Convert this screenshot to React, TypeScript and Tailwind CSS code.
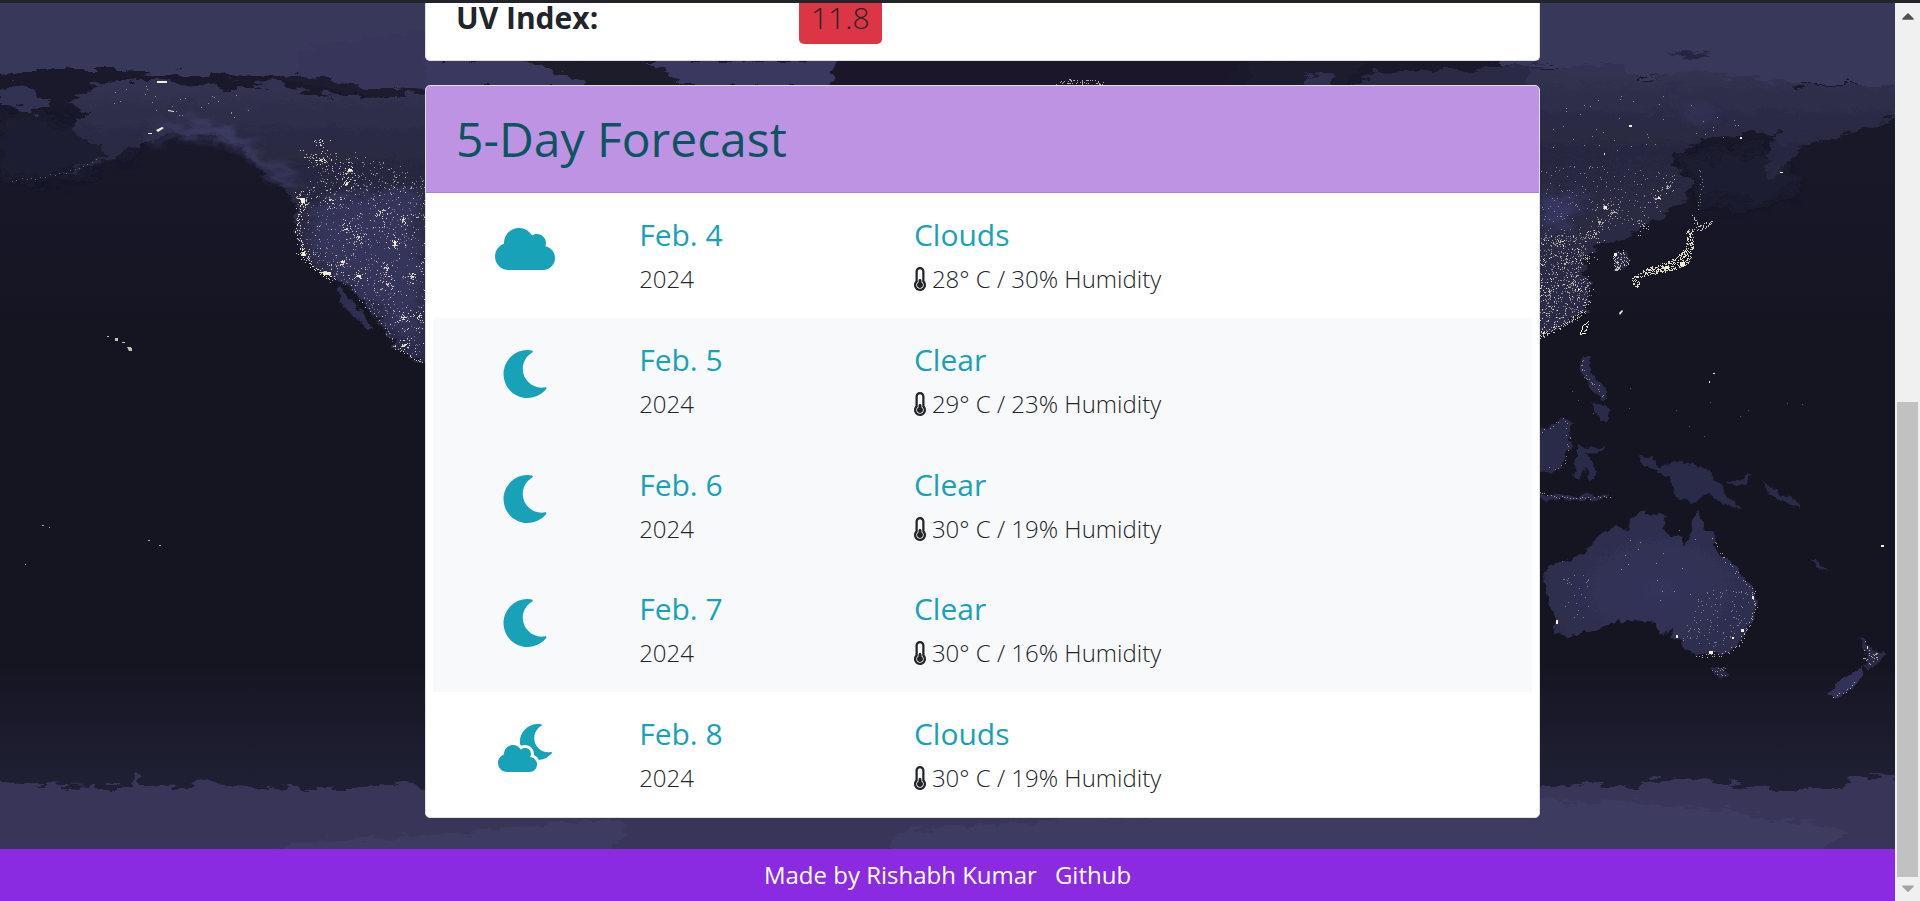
import { FaCloud, FaCloudMoon, FaMoon, FaThermometerQuarter, FaCaretUp, FaCaretDown } from "react-icons/fa";
import type { IconType } from "react-icons";

type Day = { icon: IconType; date: string; year: string; sky: string; detail: string; shaded: boolean };

const days: Day[] = [
  { icon: FaCloud, date: "Feb. 4", year: "2024", sky: "Clouds", detail: "28° C / 30% Humidity", shaded: false },
  { icon: FaMoon, date: "Feb. 5", year: "2024", sky: "Clear", detail: "29° C / 23% Humidity", shaded: true },
  { icon: FaMoon, date: "Feb. 6", year: "2024", sky: "Clear", detail: "30° C / 19% Humidity", shaded: true },
  { icon: FaMoon, date: "Feb. 7", year: "2024", sky: "Clear", detail: "30° C / 16% Humidity", shaded: true },
  { icon: FaCloudMoon, date: "Feb. 8", year: "2024", sky: "Clouds", detail: "30° C / 19% Humidity", shaded: false },
];

// Deterministic generator, so the city lights stay in place between renders.
function makeRandom(seed: number) {
  let s = seed;
  return () => {
    s = (s * 1664525 + 1013904223) % 4294967296;
    return s / 4294967296;
  };
}

type Point = [number, number];

function inside(x: number, y: number, poly: Point[]) {
  let hit = false;
  for (let i = 0, j = poly.length - 1; i < poly.length; j = i++) {
    const [xi, yi] = poly[i];
    const [xj, yj] = poly[j];
    if (yi > y !== yj > y && x < ((xj - xi) * (y - yi)) / (yj - yi) + xi) hit = !hit;
  }
  return hit;
}

function dot(x: number, y: number) {
  return `M${Math.round(x)} ${Math.round(y)}h1v1h-1z`;
}

function scatter(poly: Point[], count: number, seed: number) {
  const rnd = makeRandom(seed);
  const xs = poly.map((p) => p[0]);
  const ys = poly.map((p) => p[1]);
  const x0 = Math.min(...xs);
  const y0 = Math.min(...ys);
  const w = Math.max(...xs) - x0;
  const h = Math.max(...ys) - y0;
  let d = "";
  let placed = 0;
  for (let i = 0; i < count * 6 && placed < count; i++) {
    const x = x0 + rnd() * w;
    const y = y0 + rnd() * h;
    if (inside(x, y, poly)) {
      d += dot(x, y);
      placed++;
    }
  }
  return d;
}

function along(line: Point[], step: number, spread: number, seed: number) {
  const rnd = makeRandom(seed);
  let d = "";
  for (let i = 1; i < line.length; i++) {
    const [ax, ay] = line[i - 1];
    const [bx, by] = line[i];
    const n = Math.max(1, Math.round(Math.hypot(bx - ax, by - ay) / step));
    for (let k = 0; k < n; k++) {
      const t = k / n;
      d += dot(ax + (bx - ax) * t + (rnd() - 0.5) * spread, ay + (by - ay) * t + (rnd() - 0.5) * spread);
    }
  }
  return d;
}

// Dots that thin out with distance from each centre.
function clusters(centres: Point[], count: number, radius: number, seed: number) {
  const rnd = makeRandom(seed);
  let d = "";
  for (const [cx, cy] of centres) {
    for (let i = 0; i < count; i++) {
      const a = rnd() * Math.PI * 2;
      const r = rnd() * rnd() * radius;
      d += dot(cx + Math.cos(a) * r, cy + Math.sin(a) * r);
    }
  }
  return d;
}

const usWest: Point[] = [[297, 192], [320, 168], [350, 172], [426, 176], [426, 362], [394, 348], [380, 325], [360, 300], [342, 285], [314, 268], [300, 240], [294, 215]];
const canada: Point[] = [[300, 150], [350, 150], [400, 166], [426, 172], [426, 192], [350, 186], [310, 165]];
const china: Point[] = [[1540, 235], [1570, 235], [1600, 225], [1585, 250], [1580, 275], [1592, 292], [1585, 315], [1568, 325], [1540, 334]];
const manchuria: Point[] = [[1540, 165], [1590, 165], [1640, 170], [1690, 175], [1670, 205], [1640, 225], [1600, 232], [1540, 240]];
const siberia: Point[] = [[1540, 110], [1640, 90], [1780, 120], [1760, 138], [1680, 140], [1540, 165]];
const japan: Point[] = [[1631, 278], [1645, 268], [1660, 264], [1675, 258], [1684, 248], [1687, 240], [1685, 230], [1692, 230], [1694, 245], [1690, 262], [1680, 268], [1660, 273], [1642, 276], [1638, 288], [1633, 286]];
const usCoast: Point[] = [[297, 192], [303, 203], [300, 215], [297, 232], [302, 248], [312, 266], [326, 274], [332, 280]];
const usCities: Point[] = [[304, 202], [304, 253], [325, 273], [342, 262], [358, 276], [358, 237], [347, 182], [394, 243], [386, 268], [387, 284], [412, 276], [350, 170], [320, 160], [320, 144], [403, 317], [419, 317], [402, 219], [330, 200], [346, 228], [380, 212], [404, 345]];
const chinaCities: Point[] = [[1604, 206], [1613, 212], [1658, 197], [1560, 241], [1587, 258], [1573, 283], [1586, 287], [1549, 291], [1543, 333], [1643, 226], [1600, 222], [1668, 186], [1596, 234], [1565, 264]];
const lights = "#f4f0d8";

function NightMap() {
  return (
    <svg
      className="absolute inset-0 -z-10 h-full w-full"
      viewBox="0 0 1895 898"
      preserveAspectRatio="none"
      aria-hidden="true"
    >
      <defs>
        <linearGradient id="sea" x1="0" y1="0" x2="0" y2="1">
          <stop offset="0" stopColor="#1a1a2c" />
          <stop offset="0.22" stopColor="#171728" />
          <stop offset="0.36" stopColor="#151522" />
          <stop offset="0.74" stopColor="#151522" />
          <stop offset="0.8" stopColor="#1a1a2b" />
          <stop offset="0.86" stopColor="#1e1f33" />
          <stop offset="1" stopColor="#1e1f33" />
        </linearGradient>
        <linearGradient id="tundra" x1="0" y1="0" x2="0" y2="1">
          <stop offset="0" stopColor="#323253" />
          <stop offset="0.3" stopColor="#28283f" />
          <stop offset="1" stopColor="#2b2b49" />
        </linearGradient>
        <radialGradient id="outback" cx="0.55" cy="0.55" r="0.6">
          <stop offset="0" stopColor="#34345c" />
          <stop offset="1" stopColor="#2c2c4b" />
        </radialGradient>
        <filter id="rough" x="-5%" y="-5%" width="110%" height="110%">
          <feTurbulence type="fractalNoise" baseFrequency="0.05 0.14" numOctaves="5" seed="4" result="n" />
          <feDisplacementMap in="SourceGraphic" in2="n" scale="18" xChannelSelector="R" yChannelSelector="G" />
        </filter>
        <filter id="coast" x="-5%" y="-5%" width="110%" height="110%">
          <feTurbulence type="fractalNoise" baseFrequency="0.12" numOctaves="4" seed="9" result="n" />
          <feDisplacementMap in="SourceGraphic" in2="n" scale="9" xChannelSelector="R" yChannelSelector="G" />
        </filter>
        <filter id="soft" x="-30%" y="-60%" width="160%" height="220%">
          <feTurbulence type="fractalNoise" baseFrequency="0.04 0.08" numOctaves="4" seed="2" result="n" />
          <feGaussianBlur in="SourceGraphic" stdDeviation="6" result="b" />
          <feDisplacementMap in="b" in2="n" scale="30" xChannelSelector="R" yChannelSelector="G" />
        </filter>
      </defs>
      <g transform="translate(0 -3)">
        <rect width="1895" height="902" fill="url(#sea)" />
        <g filter="url(#soft)">
          <path d="M0 110L90 130L140 150L60 180L0 176Z" fill="#1c1d31" />
          <path d="M1680 155L1770 150L1800 190L1750 205L1700 200Z" fill="#1c1d31" />
        </g>
        <g filter="url(#rough)">
          <path d="M-10 -10H1910V90L1850 84L1790 84L1760 80L1700 74L1640 78L1620 66H1500V20H430V64L300 75L285 76L200 75L140 72L110 70L30 70L14 78L-10 76Z" fill="#38375a" />
          <path d="M0 90L20 86L50 104L36 112L14 106L0 104Z" fill="#313152" />
          <path d="M90 86L120 80L160 80L190 84L235 88L280 82L300 92L350 96L430 94V366L394 348L383 328L370 310L360 300L342 282L332 278L314 268L300 245L294 215L296 195L280 185L255 165L240 145L212 134L175 132L150 142L115 156L70 174L60 174L110 152L75 135L75 122L92 112L65 106Z" fill="url(#tundra)" />
          <path d="M300 50L345 40L430 32V94L350 88L295 72Z" fill="#37365a" />
          <path d="M280 74L320 76L350 86L430 90L425 95L350 94L310 84L280 80Z" fill="#1b1b2d" />
          <path d="M426 60H860V88H426Z" fill="#3a3960" />
          <path d="M520 60L650 60L690 88H600L540 66Z" fill="#1b1a2c" />
          <path d="M835 58H1250L1228 76L1240 90H832Z" fill="#1a192a" />
          <path d="M1245 58H1372L1340 90H1250Z" fill="#1c1b2d" />
          <path d="M1306 78L1330 74L1334 90H1300Z" fill="#302f50" />
          <path d="M1375 72L1500 68L1540 62V90H1345Z" fill="#2a2945" />
          <path d="M1530 68L1570 66L1625 66L1640 80L1700 70L1745 78L1790 82L1800 86H1905V116L1880 122L1845 134L1800 148L1785 165L1775 180L1767 168L1768 145L1780 130L1740 136L1700 142L1670 160L1690 180L1690 195L1660 220L1640 228L1620 240L1600 245L1582 258L1590 285L1588 305L1570 325L1530 338Z" fill="url(#tundra)" />
          <path d="M1786 150L1770 140L1800 128L1812 130Z" fill="#2a2a46" />
          <path d="M1668 52L1690 51L1710 56L1690 58Z" fill="#262640" />
        </g>
        <g filter="url(#soft)">
          <path d="M145 138Q180 114 230 132L290 176L305 186L290 184L235 146Q190 124 150 138Z" fill="#45446f" />
          <path d="M310 205L420 185V350L350 280L318 262Z" fill="#35355c" />
          <path d="M1540 190L1580 195L1570 228L1540 228Z" fill="#363560" />
          <path d="M1670 95L1720 116L1700 128L1690 118Z" fill="#303052" />
        </g>
        <g filter="url(#coast)">
          <path d="M340 284L350 290L362 309L373 330L366 330L352 314L340 302L338 290Z" fill="#2d2d4f" />
          <path d="M342 284L354 292L374 316L388 338L374 326L352 302L344 294Z" fill="#161623" />
          <g fill="#2a2a48">
            <path d="M1583 356L1590 356L1589 372L1597 378L1607 390L1603 401L1592 390L1586 380L1580 370Z" />
            <path d="M1530 434L1554 424L1563 416L1573 424L1568 440L1572 447L1565 454L1560 470L1550 473L1530 469Z" />
            <path d="M1592 402L1604 404L1611 410L1606 422L1596 414Z" />
            <path d="M1578 446L1600 448L1606 444L1602 453L1584 454L1592 460L1597 476L1591 481L1584 467L1580 482L1574 478L1576 460Z" />
            <path d="M1638 456L1652 457L1660 470L1672 460L1704 468L1716 478L1728 498L1742 508L1722 504L1710 494L1692 502L1676 496L1668 478L1648 468Z" />
            <path d="M1540 494L1580 496L1612 495L1600 500L1570 500L1540 499Z" />
            <path d="M1726 481L1744 479L1750 473L1749 482L1736 487Z" />
            <path d="M1761 480L1770 487L1796 501L1801 509L1782 501L1768 492Z" />
            <path d="M1812 558L1820 563L1826 570L1816 567Z" />
          </g>
          <path d="M1696 509L1701 518L1704 526L1713 533L1714 546L1720 554L1733 563L1742 577L1753 587L1756 602L1752 620L1742 637L1736 647L1722 655L1710 653L1694 655L1684 648L1682 640L1671 638L1672 628L1662 636L1652 622L1636 618L1612 623L1598 631L1582 631L1568 637L1554 632L1555 618L1547 595L1544 578L1548 566L1564 560L1586 554L1592 541L1606 532L1615 525L1628 530L1632 519L1642 512L1654 515L1667 516L1662 528L1668 534L1680 539L1686 545L1690 540L1692 522Z" fill="url(#outback)" />
          <path d="M1711 667L1726 667L1727 676L1720 680L1713 674Z" fill="#282845" />
          <path d="M1857 634L1865 640L1872 650L1886 652L1878 664L1868 670L1864 666L1868 656L1862 642Z" fill="#292947" />
          <path d="M1862 668L1860 680L1846 692L1836 697L1827 694L1838 682L1852 674Z" fill="#333358" />
          <path d="M1614 252L1624 250L1631 262L1624 270L1614 270Z" fill="#2a2a46" />
        </g>
        <g filter="url(#rough)">
          <path d="M-10 780L40 784L90 786L130 786L136 772L142 786L190 788L206 778L214 784L290 788L350 788L390 784L430 788H1540L1590 784L1640 786L1660 778L1700 780L1760 788L1840 788L1860 774L1910 782V910H-10Z" fill="#373658" />
          <path d="M1480 806L1540 800L1640 802L1740 812L1850 830L1810 860H900L890 838L910 828L1000 824L1100 816Z" fill="#3c3b61" />
          <path d="M420 836L560 822L620 820L625 836L600 860H240L300 842Z" fill="#3c3b61" />
        </g>
        <g fill={lights}>
          <path d={scatter(usWest, 520, 7)} opacity="0.4" />
          <path d={scatter(usWest, 200, 17)} opacity="0.8" />
          <path d={clusters(usCities, 30, 15, 61)} opacity="0.85" />
          <path d={scatter(canada, 110, 9)} opacity="0.55" />
          <path d={along(usCoast, 1, 6, 3)} opacity="0.9" />
          <path d={along([[332, 280], [350, 255], [358, 232], [360, 215]], 3, 7, 5)} opacity="0.6" />
          <path d={along([[394, 347], [410, 356], [425, 364]], 2, 3, 8)} opacity="0.8" />
          <path d={along([[302, 152], [322, 163], [345, 172], [348, 190]], 2, 8, 11)} opacity="0.8" />
          <path d={along([[360, 300], [382, 323], [394, 340]], 4, 3, 15)} opacity="0.7" />
          <path d={scatter(china, 430, 21)} opacity="0.5" />
          <path d={scatter(china, 120, 22)} opacity="0.9" />
          <path d={clusters(chinaCities, 24, 14, 62)} opacity="0.7" />
          <path d={scatter(manchuria, 190, 25)} opacity="0.45" />
          <path d={scatter(siberia, 40, 27)} opacity="0.5" />
          <path d={scatter(japan, 420, 31)} opacity="0.9" />
          <path d={along([[1540, 334], [1560, 328], [1578, 316], [1588, 300]], 1, 5, 33)} opacity="0.8" />
          <path d={along([[1693, 215], [1697, 226], [1712, 222], [1700, 230], [1687, 230]], 1, 3, 35)} opacity="0.8" />
          <path d={along([[1700, 170], [1702, 190], [1697, 212]], 3, 4, 36)} opacity="0.5" />
          <path d={scatter([[1612, 252], [1624, 250], [1630, 262], [1624, 270], [1614, 270]], 70, 37)} opacity="0.8" />
          <path d={along([[1588, 321], [1582, 326], [1580, 334], [1584, 333], [1588, 324]], 1, 1, 38)} />
          <path d={along([[1583, 360], [1582, 370], [1586, 378], [1600, 390], [1603, 398]], 2, 4, 39)} opacity="0.5" />
          <path d={along([[1753, 590], [1755, 605], [1750, 622], [1738, 645], [1722, 655], [1695, 655]], 2, 4, 41)} opacity="0.7" />
          <path d={along([[1713, 540], [1722, 556], [1736, 572], [1752, 590]], 3, 4, 42)} opacity="0.6" />
          <path d={scatter([[1700, 590], [1750, 590], [1748, 625], [1715, 652], [1680, 640]], 110, 43)} opacity="0.4" />
          <path d={scatter([[1560, 560], [1590, 580], [1590, 625], [1560, 610]], 28, 44)} opacity="0.4" />
          <path d={scatter([[1600, 530], [1700, 530], [1690, 600], [1600, 600]], 16, 45)} opacity="0.5" />
          <path d={along([[1540, 492], [1556, 497], [1585, 498], [1612, 496]], 3, 2, 46)} opacity="0.6" />
          <path d={along([[1543, 432], [1563, 418], [1570, 440], [1562, 465], [1545, 470]], 4, 4, 47)} opacity="0.5" />
          <path d={scatter([[1864, 640], [1882, 652], [1870, 670], [1862, 660]], 26, 48)} opacity="0.7" />
          <path d={along([[1834, 696], [1846, 692], [1857, 681]], 3, 3, 49)} opacity="0.7" />
          <path d={along([[12, 180], [35, 178], [65, 172], [100, 158]], 5, 2, 50)} opacity="0.35" />
          <path d={scatter([[90, 80], [240, 90], [280, 140], [160, 115], [100, 130]], 26, 51)} opacity="0.5" />
          <path d={scatter([[1710, 667], [1727, 667], [1725, 678], [1712, 672]], 16, 52)} opacity="0.5" />
          <path d={scatter([[1540, 380], [1890, 400], [1890, 470], [1620, 440]], 14, 53)} opacity="0.3" />
          <path d={scatter([[1048, 84], [1070, 79], [1095, 79], [1112, 85]], 50, 54)} opacity="0.7" />
          <path d="M157 81h10v2h-10zM168 110l6 1v1l-6 -1zM156 130l6 -3l2 1l-6 4zM148 133h4v1h-4z" />
          <path d="M107 336h2v1h-2zM115 338h3v3h-3zM122 342h3v1h-3zM127 347h4v1h1v3h-3z" opacity="0.8" />
          <path d="M42 525h2v1h-2zM49 527h1v1h-1zM159 545h2v1h-2zM25 564h1v1h-1zM148 540h2v1h-2z" opacity="0.7" />
          <path d="M301 198h4v5h-4zM323 272h8v3h-8zM302 252h3v4h-3zM357 275h4v2h-4zM394 241h2v5h-2zM348 169h4v2h-4zM346 183h2v2h-2zM341 261h2v2h-2z" />
          <path d="M1680 262h5v4h-5zM1665 266h4v3h-4zM1614 253h3v3h-3zM1741 629h3v3h-3zM1709 651h4v3h-4zM1752 596h2v3h-2zM1556 620h2v4h-2zM1676 635h2v3h-2zM1732 637h2v2h-2zM1619 313l3 -3l1 1l-3 4zM1709 381h1v2h-1zM1713 373h2v1h-2zM1780 172h3v1h-3zM1740 137h2v2h-2zM1604 153h1v2h-1zM1629 125h3v2h-3zM1604 206h3v3h-3zM1658 197h2v2h-2zM1867 646h1v3h-1zM1881 545h3v2h-3z" />
        </g>
      </g>
    </svg>
  );
}

function DayRow({ icon: Icon, date, year, sky, detail, shaded }: Day) {
  return (
    <li className={shaded ? "grid grid-cols-12 bg-[#f8f9fa]" : "grid grid-cols-12"}>
      <div className="col-span-2 flex justify-center pt-8">
        <Icon className="h-12 w-[60px] text-[#17a2b8]" />
      </div>
      <div className="col-span-3 px-[23px] pt-6">
        <h4 className="text-[30px] leading-9 text-[#17a2b8]">{date}</h4>
        <p className="mt-2 text-2xl leading-9 font-light">{year}</p>
      </div>
      <div className="col-span-7 px-[23px] pt-6">
        <h4 className="text-[30px] leading-9 text-[#17a2b8]">{sky}</h4>
        <p className="mt-2 flex items-center gap-1.5 text-2xl leading-9 font-light">
          <FaThermometerQuarter className="h-6 w-3" />
          {detail}
        </p>
      </div>
    </li>
  );
}

export default function App() {
  return (
    <div className="flex min-h-screen flex-col border-t-[3px] border-[#212529] font-['Open_Sans',sans-serif] text-[#212529]">
      <div className="flex flex-1">
        <div className="relative isolate flex min-w-0 flex-1 flex-col">
          <NightMap />
          <main className="mx-auto w-full max-w-[1185px] flex-1 pl-[70px]">
            <section className="flex h-[58px] rounded-b-[5px] border border-t-0 border-[#dfdfdf] bg-white pl-[30px] text-[30px] leading-[30px]">
              <h5 className="w-[343px] font-bold">UV Index:</h5>
              <span className="h-[41px] rounded-b-[5px] bg-[#dc3545] px-3 font-light">11.8</span>
            </section>
            <section className="mt-6 mb-[31px] overflow-hidden rounded-[5px] border border-[#dfdfdf] bg-white">
              <header className="border-b border-[#a983cc] bg-[#be93e4] px-[30px] py-[23px]">
                <h1 className="text-5xl leading-[60px] text-[#0c5460]">5-Day Forecast</h1>
              </header>
              <ul className="grid h-[624px] grid-rows-5 px-[7px]">
                {days.map((day) => (
                  <DayRow key={day.date} {...day} />
                ))}
              </ul>
            </section>
          </main>
          <footer className="flex h-[52px] items-center justify-center gap-[18px] bg-[#8a2be2] text-2xl leading-9 text-white">
            <span>Made by Rishabh Kumar</span>
            <a href="https://github.com">Github</a>
          </footer>
        </div>
        <div className="flex w-[25px] flex-col items-center justify-between bg-[#f0f0f0] py-[3px]" aria-hidden="true">
          <FaCaretUp className="size-5 text-[#505050]" />
          <div className="mt-auto mb-px h-[475px] w-[21px] bg-[#c1c1c1]" />
          <FaCaretDown className="size-5 text-[#a3a3a3]" />
        </div>
      </div>
    </div>
  );
}
